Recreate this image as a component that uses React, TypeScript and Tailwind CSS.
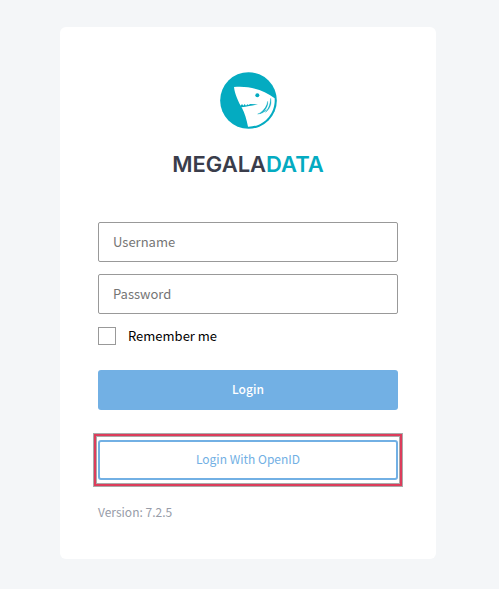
import React, { useState } from "react";

const SharkLogo: React.FC = () => (
  <svg viewBox="0 0 171 171" className="h-[57px] w-[57px]" aria-hidden="true">
    <circle cx="85.5" cy="85.5" r="85" fill="#04abc1" />
    <path
      d="M42 45C84 41 128 51 164 79C167 124 132 165 84 164C80 143 74 122 66 108C56 92 44 66 42 45Z"
      fill="#fff"
    />
    <circle cx="112" cy="70" r="6" fill="#04abc1" />
    <path
      d="M58 97L62 101L66 96L70 101L74 96L78 101L82 97L86 99L90 96L114 97C98 101 84 103 64 106Z"
      fill="#04abc1"
    />
    <path
      d="M152 79C156 98 148 113 136 121C147 109 151 96 152 79ZM143 88C145 103 136 117 121 123C134 113 141 102 143 88ZM139 113C132 121 124 125 113 126C123 122 130 119 139 113Z"
      fill="#04abc1"
      stroke="#04abc1"
      strokeWidth="1"
    />
  </svg>
);

const inputClass =
  "block h-10 w-full rounded-xs border border-[#999] bg-white px-3.5 pb-0.5 text-[13px] text-black outline-none placeholder:text-[#757575]";

export default function App() {
  const [username, setUsername] = useState("");
  const [password, setPassword] = useState("");
  const [remember, setRemember] = useState(false);

  return (
    <div className="min-h-screen bg-[#f4f6f8] pt-[27px] pr-[63px] pb-[30px] pl-[60px] font-['Noto_Sans_CJK_SC',sans-serif] text-[13px] leading-5">
      <main className="mx-auto w-full max-w-[376px] rounded-md bg-white px-[38px] pt-[45px] pb-[37px]">
        <header className="flex flex-col items-center">
          <SharkLogo />
          <h1 className="mt-5 font-['Inter',sans-serif] text-[22px] leading-[30px] font-semibold text-[#3a3d4b]">
            MEGALA<span className="text-[#04abc1]">DATA</span>
          </h1>
        </header>

        <form className="mt-[43px]" onSubmit={(e) => e.preventDefault()}>
          <div className="space-y-3">
            <input
              type="text"
              aria-label="Username"
              placeholder="Username"
              value={username}
              onChange={(e) => setUsername(e.target.value)}
              className={inputClass}
            />
            <input
              type="password"
              aria-label="Password"
              placeholder="Password"
              value={password}
              onChange={(e) => setPassword(e.target.value)}
              className={inputClass}
            />
          </div>

          <label className="mt-3 flex items-center gap-3 text-black">
            <input
              type="checkbox"
              checked={remember}
              onChange={(e) => setRemember(e.target.checked)}
              className="h-[18px] w-[18px] appearance-none border border-[#999] bg-white checked:bg-[#72b0e4]"
            />
            Remember me
          </label>

          <button
            type="submit"
            className="mt-6 h-10 w-full rounded-[3px] bg-[#72b0e4] pb-0.5 text-xs font-medium text-white"
          >
            Login
          </button>

          <div className="-mx-1 mt-6 border-2 border-[#dc3c5b] px-0.5 py-1 shadow-[0_0_0_1px_#aaa,inset_0_0_0_1px_#aaa]">
            <button
              type="button"
              className="block h-10 w-full rounded-[3px] border-2 border-[#72b0e4] bg-white pb-0.5 text-xs text-[#72b0e4]"
            >
              Login With OpenID
            </button>
          </div>
        </form>

        <p className="mt-4 text-xs leading-5 text-[#979ca8]">Version: 7.2.5</p>
      </main>
    </div>
  );
}
